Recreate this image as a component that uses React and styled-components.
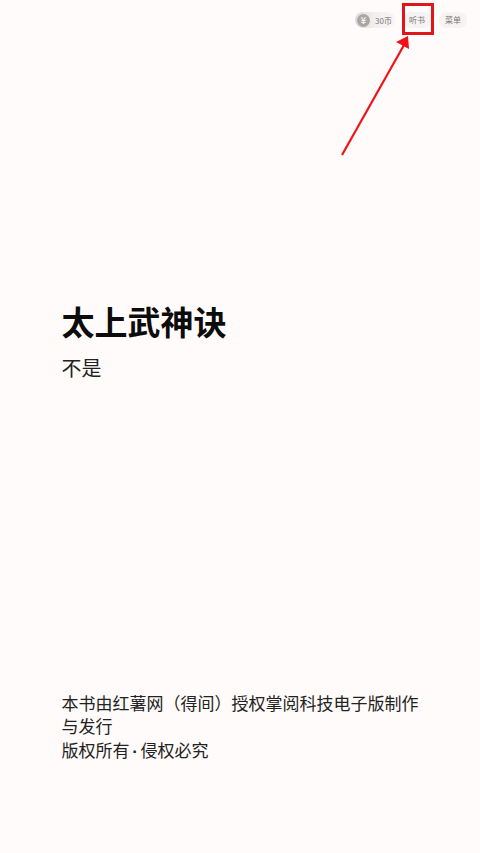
import styled, { createGlobalStyle } from 'styled-components'

const GlobalStyle = createGlobalStyle`
  html, body {
    margin: 0;
    padding: 0;
    background: #fffbfa;
  }
`

const Page = styled.div`
  position: relative;
  width: 480px;
  height: 853px;
  overflow: hidden;
  display: flex;
  flex-direction: column;
  background: #fffbfa;
  font-family: "Noto Sans CJK SC", "Liberation Sans", sans-serif;
  color: #111;
`

const TopBar = styled.div`
  display: flex;
  justify-content: flex-end;
  align-items: center;
  gap: 8px;
  padding: 12px 13px 0 0;
  height: 16px;
`

const CoinPill = styled.div`
  display: flex;
  align-items: center;
  gap: 5px;
  width: 40px;
  height: 16px;
  border-radius: 8px;
  background: linear-gradient(90deg, #dcd9d8 0%, #f1eeed 45%, #f8f5f4 100%);
  font-size: 8px;
  line-height: 15px;
  color: #777;
  white-space: nowrap;
`

const CoinIcon = styled.div`
  flex: none;
  width: 13px;
  height: 13px;
  margin-left: 2px;
  border-radius: 50%;
  background: #a9a6a5;
  color: #f4f1f0;
  display: flex;
  align-items: center;
  justify-content: center;
  font-size: 9px;
  font-weight: 700;
  line-height: 1;
`

const MenuPill = styled.div`
  width: 28px;
  height: 16px;
  border-radius: 8px;
  background: #f6f3f2;
  font-size: 8px;
  line-height: 15px;
  text-align: center;
  color: #777;
`

const Cover = styled.div`
  padding: 269px 0 0 61.5px;
`

const Title = styled.h1`
  margin: 0;
  font-size: 33px;
  line-height: 48px;
  font-weight: 700;
  color: #0c0c0c;
`

const Author = styled.p`
  margin: 8px 0 0;
  font-size: 20px;
  line-height: 29px;
  color: #222;
`

const Notice = styled.div`
  margin-top: auto;
  padding: 0 60px 90px 61.5px;
  font-size: 17px;
  line-height: 23.5px;
  color: #222;
`

const NoticeLine = styled.p`
  margin: 0;
`

const Dot = styled.span`
  display: inline-block;
  width: 11px;
  text-align: center;
  font-family: "Liberation Sans", sans-serif;
  font-weight: 700;
`

const HighlightBox = styled.div`
  position: absolute;
  left: 402px;
  top: 3px;
  width: 32px;
  height: 32px;
  box-sizing: border-box;
  border: 3px solid #e0161c;
`

const ArrowSvg = styled.svg`
  position: absolute;
  left: 330px;
  top: 30px;
`

export default function App() {
  return (
    <>
      <GlobalStyle />
      <Page>
        <TopBar>
          <CoinPill>
            <CoinIcon>¥</CoinIcon>
            30币
          </CoinPill>
          <MenuPill>听书</MenuPill>
          <MenuPill>菜单</MenuPill>
        </TopBar>
        <Cover>
          <Title>太上武神诀</Title>
          <Author>不是</Author>
        </Cover>
        <Notice>
          <NoticeLine>本书由红薯网（得间）授权掌阅科技电子版制作与发行</NoticeLine>
          <NoticeLine>版权所有<Dot>·</Dot>侵权必究</NoticeLine>
        </Notice>
        <HighlightBox />
        <ArrowSvg width="90" height="130" viewBox="0 0 90 130">
          <line x1="12" y1="125" x2="74" y2="15" stroke="#f01218" strokeWidth="2.2" />
          <polygon points="78,6 79,19 66,12" fill="#f01218" />
        </ArrowSvg>
      </Page>
    </>
  )
}
